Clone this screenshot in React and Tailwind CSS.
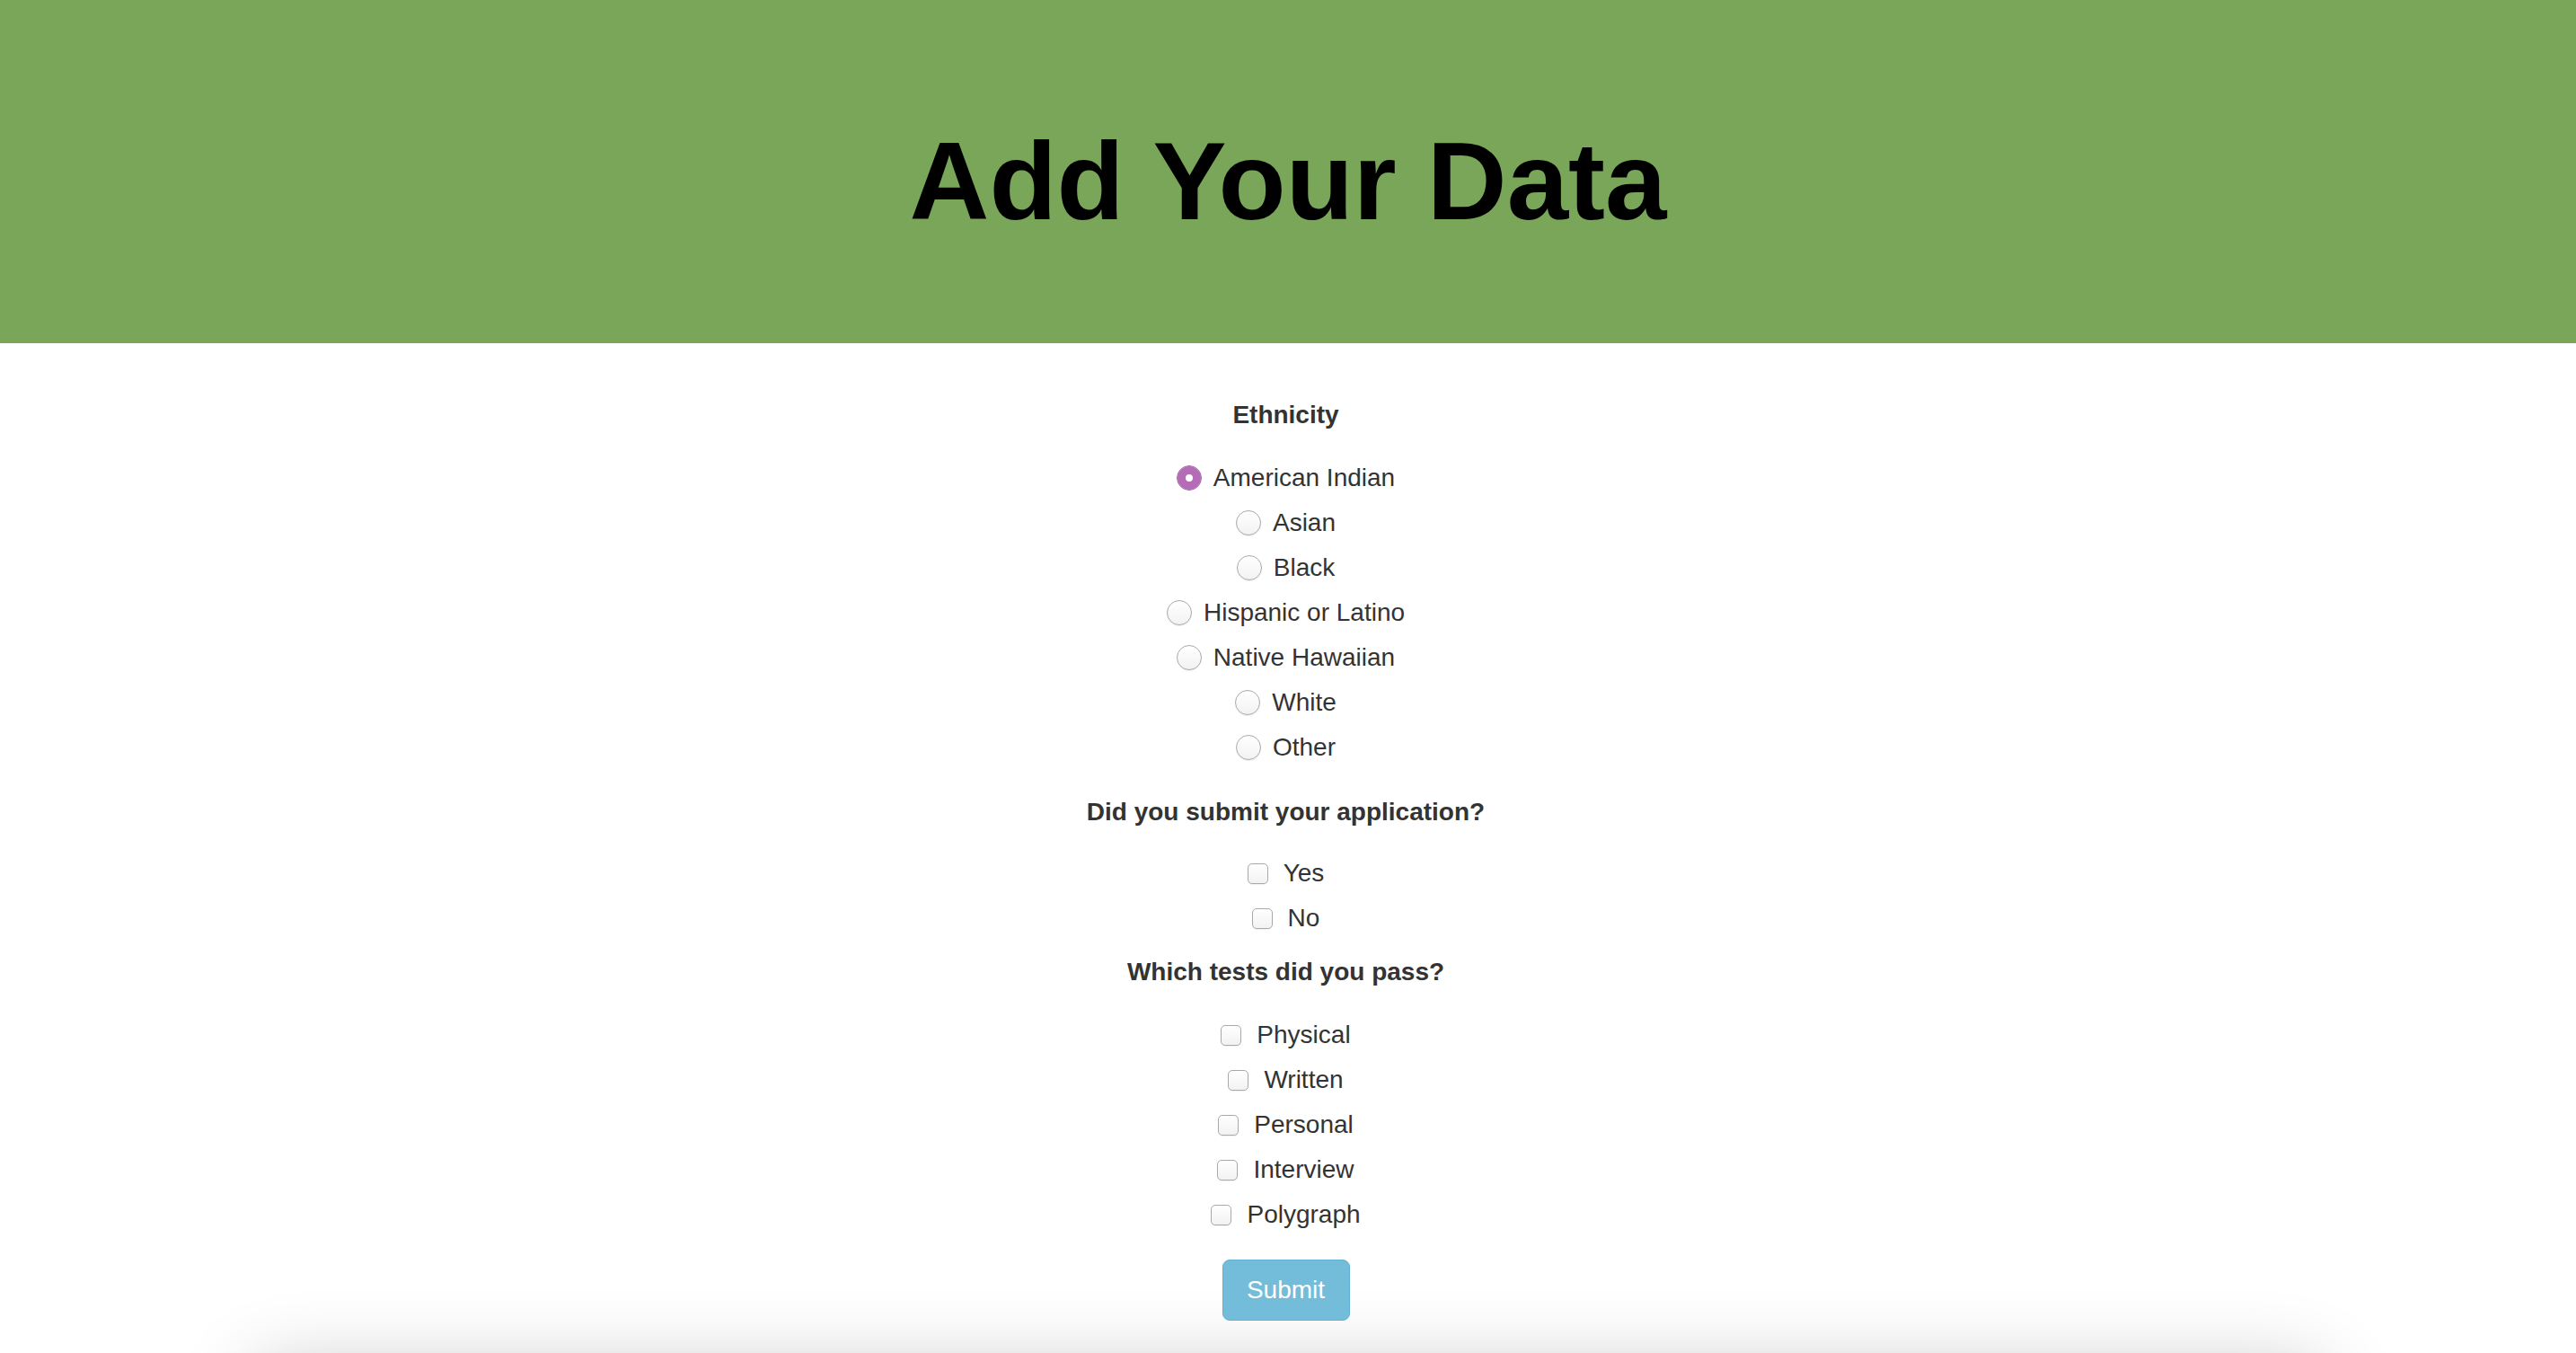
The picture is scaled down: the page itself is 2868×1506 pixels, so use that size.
import React, { useState } from 'react';

const ethnicities = [
  'American Indian',
  'Asian',
  'Black',
  'Hispanic or Latino',
  'Native Hawaiian',
  'White',
  'Other',
];

const tests = ['Physical', 'Written', 'Personal', 'Interview', 'Polygraph'];

function Heading({ children, className = '' }) {
  return (
    <h3 className={`h-[40px] text-[28px] font-bold leading-[40px] text-[#333] ${className}`}>
      {children}
    </h3>
  );
}

function RadioRow({ label, checked, onChange }) {
  return (
    <label className="flex h-[50px] cursor-pointer items-center justify-center gap-[13px]">
      <input
        type="radio"
        name="ethnicity"
        checked={checked}
        onChange={onChange}
        className="h-[28px] w-[28px] cursor-pointer appearance-none rounded-full border border-[#a9a9a9] bg-gradient-to-b from-white to-[#f2f2f2] shadow-[0_1px_1px_rgba(0,0,0,0.08)] checked:border-[#a660aa] checked:bg-white checked:bg-none checked:shadow-[inset_0_0_0_9px_#b46cb7]"
      />
      <span className="text-[28px] leading-none text-[#333]">{label}</span>
    </label>
  );
}

function CheckRow({ label, checked, onChange }) {
  return (
    <label className="flex h-[50px] cursor-pointer items-center justify-center gap-[17px]">
      <input
        type="checkbox"
        checked={checked}
        onChange={onChange}
        className="h-[23px] w-[23px] cursor-pointer appearance-none rounded-[5px] border border-[#a9a9a9] bg-gradient-to-b from-white to-[#f2f2f2] shadow-[0_1px_1px_rgba(0,0,0,0.06)] checked:border-[#a660aa] checked:bg-[#b46cb7] checked:bg-none"
      />
      <span className="text-[28px] leading-none text-[#333]">{label}</span>
    </label>
  );
}

export default function App() {
  const [ethnicity, setEthnicity] = useState('American Indian');
  const [submitted, setSubmitted] = useState({ Yes: false, No: false });
  const [passed, setPassed] = useState({});

  return (
    <div className="h-[1506px] overflow-hidden bg-white font-['Liberation_Sans',Arial,sans-serif] text-[#333]">
      <header className="h-[382px] bg-[#7aa65a] pt-[140px] text-center">
        <h1 className="text-[123px] font-bold leading-none text-black">
          Add Your Data
        </h1>
      </header>

      <form
        className="flex flex-col items-center pt-[60px] pr-[5px]"
        onSubmit={(e) => e.preventDefault()}
      >
        <Heading>Ethnicity</Heading>
        <div className="mt-[25px] flex flex-col">
          {ethnicities.map((item) => (
            <RadioRow
              key={item}
              label={item}
              checked={ethnicity === item}
              onChange={() => setEthnicity(item)}
            />
          ))}
        </div>

        <Heading className="mt-[27px]">Did you submit your application?</Heading>
        <div className="mt-[23px] flex flex-col">
          {['Yes', 'No'].map((item) => (
            <CheckRow
              key={item}
              label={item}
              checked={submitted[item]}
              onChange={() => setSubmitted((prev) => ({ ...prev, [item]: !prev[item] }))}
            />
          ))}
        </div>

        <Heading className="mt-[15px]">Which tests did you pass?</Heading>
        <div className="mt-[25px] flex flex-col">
          {tests.map((item) => (
            <CheckRow
              key={item}
              label={item}
              checked={!!passed[item]}
              onChange={() => setPassed((prev) => ({ ...prev, [item]: !prev[item] }))}
            />
          ))}
        </div>

        <button
          type="submit"
          className="mt-[25px] h-[68px] w-[142px] rounded-[8px] border border-[#62b0d4] bg-[#73bcda] text-[28px] leading-none text-white"
        >
          Submit
        </button>
      </form>

      <div className="mx-auto mt-[55px] h-[400px] w-[2300px] bg-white shadow-[0_0_80px_rgba(0,0,0,0.24)]"></div>
    </div>
  );
}
